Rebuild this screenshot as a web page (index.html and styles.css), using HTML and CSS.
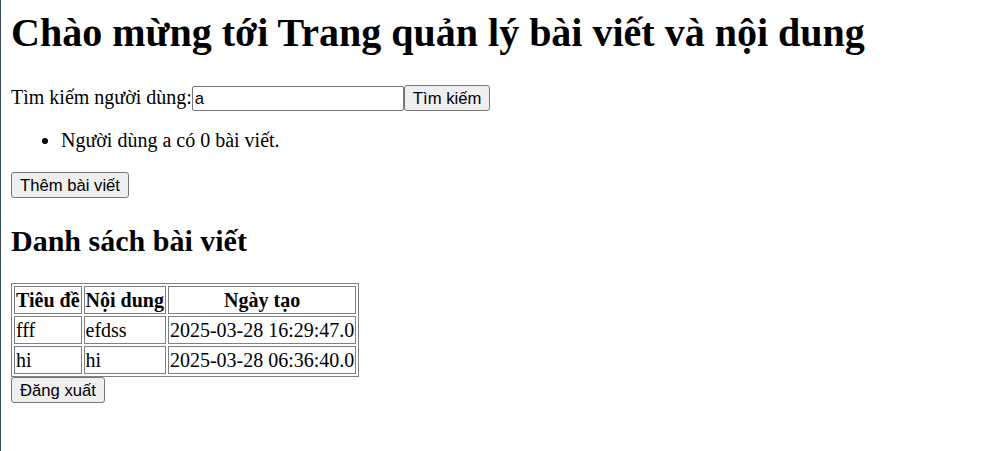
FILE: index.html
```html
<!DOCTYPE html>
<html lang="vi">
<head>
<meta charset="utf-8">
<title>Trang quản lý bài viết</title>
<link rel="stylesheet" href="styles.css">
</head>
<body>
<h1 class="title">Chào mừng tới Trang quản lý bài viết và nội dung</h1>
<form class="search">Tìm kiếm người dùng:<input class="field" type="text" value="a"><button class="btn" type="button">Tìm kiếm</button></form>
<ul class="results">
<li>Người dùng a có 0 bài viết.</li>
</ul>
<p class="actions"><button class="btn" type="button">Thêm bài viết</button></p>
<h2 class="subtitle">Danh sách bài viết</h2>
<table class="posts">
<tr><th>Tiêu đề</th><th>Nội dung</th><th>Ngày tạo</th></tr>
<tr><td>fff</td><td>efdss</td><td>2025-03-28 16:29:47.0</td></tr>
<tr><td>hi</td><td>hi</td><td>2025-03-28 06:36:40.0</td></tr>
</table>
<button class="btn" type="button">Đăng xuất</button>
</body>
</html>
```
FILE: styles.css
```css
html {
  border-left: 1px solid #3d4a66;
  min-height: 100%;
  box-sizing: border-box;
  background: #fff;
}
body {
  margin: 0;
  padding: 0 10px;
  font-family: "Liberation Serif", "Times New Roman", serif;
  font-size: 20px;
  line-height: 23px;
  color: #000;
}
.title {
  font-size: 40px;
  line-height: 46px;
  font-weight: bold;
  margin: 10px 0 29px;
}
.search {
  margin: 0 0 18px;
  display: block;
}
.field {
  font-family: "Liberation Sans", Arial, sans-serif;
  font-size: 16.67px;
  width: 212px;
  height: 25px;
  box-sizing: border-box;
  padding: 1px 2px;
  margin: 0;
  border: 1px solid #767676;
  border-radius: 2px;
  vertical-align: baseline;
}
.btn {
  font-family: "Liberation Sans", Arial, sans-serif;
  font-size: 16.67px;
  line-height: 19px;
  height: 26px;
  box-sizing: border-box;
  padding: 2px 8px;
  margin: 0;
  border: 1px solid #767676;
  border-radius: 3px;
  background: #efefef;
  color: #000;
}
.results {
  margin: 0 0 20px;
  padding-left: 50px;
}
.actions {
  margin: 20px 0;
}
.subtitle {
  font-size: 30px;
  line-height: 35px;
  font-weight: bold;
  margin: 25px 0;
}
.posts {
  border: 1px solid #808080;
  border-spacing: 2.5px;
  border-collapse: separate;
}
.posts th,
.posts td {
  border: 1px solid #808080;
  padding: 1.5px 1px;
  line-height: 23px;
}
.posts td {
  text-align: left;
}
```
